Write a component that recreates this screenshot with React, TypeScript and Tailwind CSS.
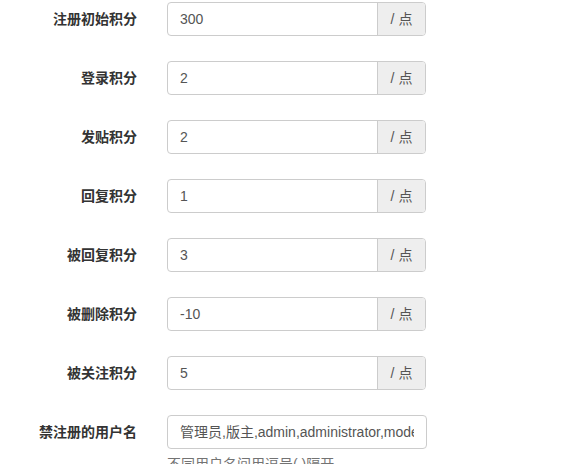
import React from 'react';

const rows: { label: string; value: string }[] = [
    { label: '注册初始积分', value: '300' },
    { label: '登录积分', value: '2' },
    { label: '发贴积分', value: '2' },
    { label: '回复积分', value: '1' },
    { label: '被回复积分', value: '3' },
    { label: '被删除积分', value: '-10' },
    { label: '被关注积分', value: '5' },
];

const font = "font-['Liberation_Sans','Noto_Sans_CJK_SC',sans-serif]";

export default function App() {
    return (
        <div className={`w-[568px] h-[464px] overflow-hidden bg-white pt-[2px] text-[14px] text-[#333] ${font}`}>
            {rows.map(r => (
                <div key={r.label} className="flex items-start mb-[25px]">
                    <label className="w-[137px] shrink-0 text-right font-bold leading-[34px]">{r.label}</label>
                    <div className="ml-[30px] w-[259px] h-[34px] flex border border-[#ccc] rounded-[4px] overflow-hidden">
                        <div className="flex-1 px-[12px] leading-[32px] text-[#555]">{r.value}</div>
                        <div className="w-[48px] shrink-0 bg-[#eee] border-l border-[#ccc] text-center leading-[32px] text-[#555]">/ 点</div>
                    </div>
                </div>
            ))}

            {/* 禁止注册的用户名 */}
            <div className="flex items-start">
                <label className="w-[137px] shrink-0 text-right font-bold leading-[34px]">禁注册的用户名</label>
                <div className="ml-[30px] w-[260px]">
                    <div className="h-[34px] border border-[#ccc] rounded-[4px] px-[12px]">
                        <div className="leading-[32px] text-[#555] whitespace-nowrap overflow-hidden">
                            管理员,版主,admin,administrator,moderator
                        </div>
                    </div>
                    <div className="mt-[5px] text-[#737373] leading-[20px]">不同用户名间用逗号(,)隔开</div>
                </div>
            </div>
        </div>
    );
}
